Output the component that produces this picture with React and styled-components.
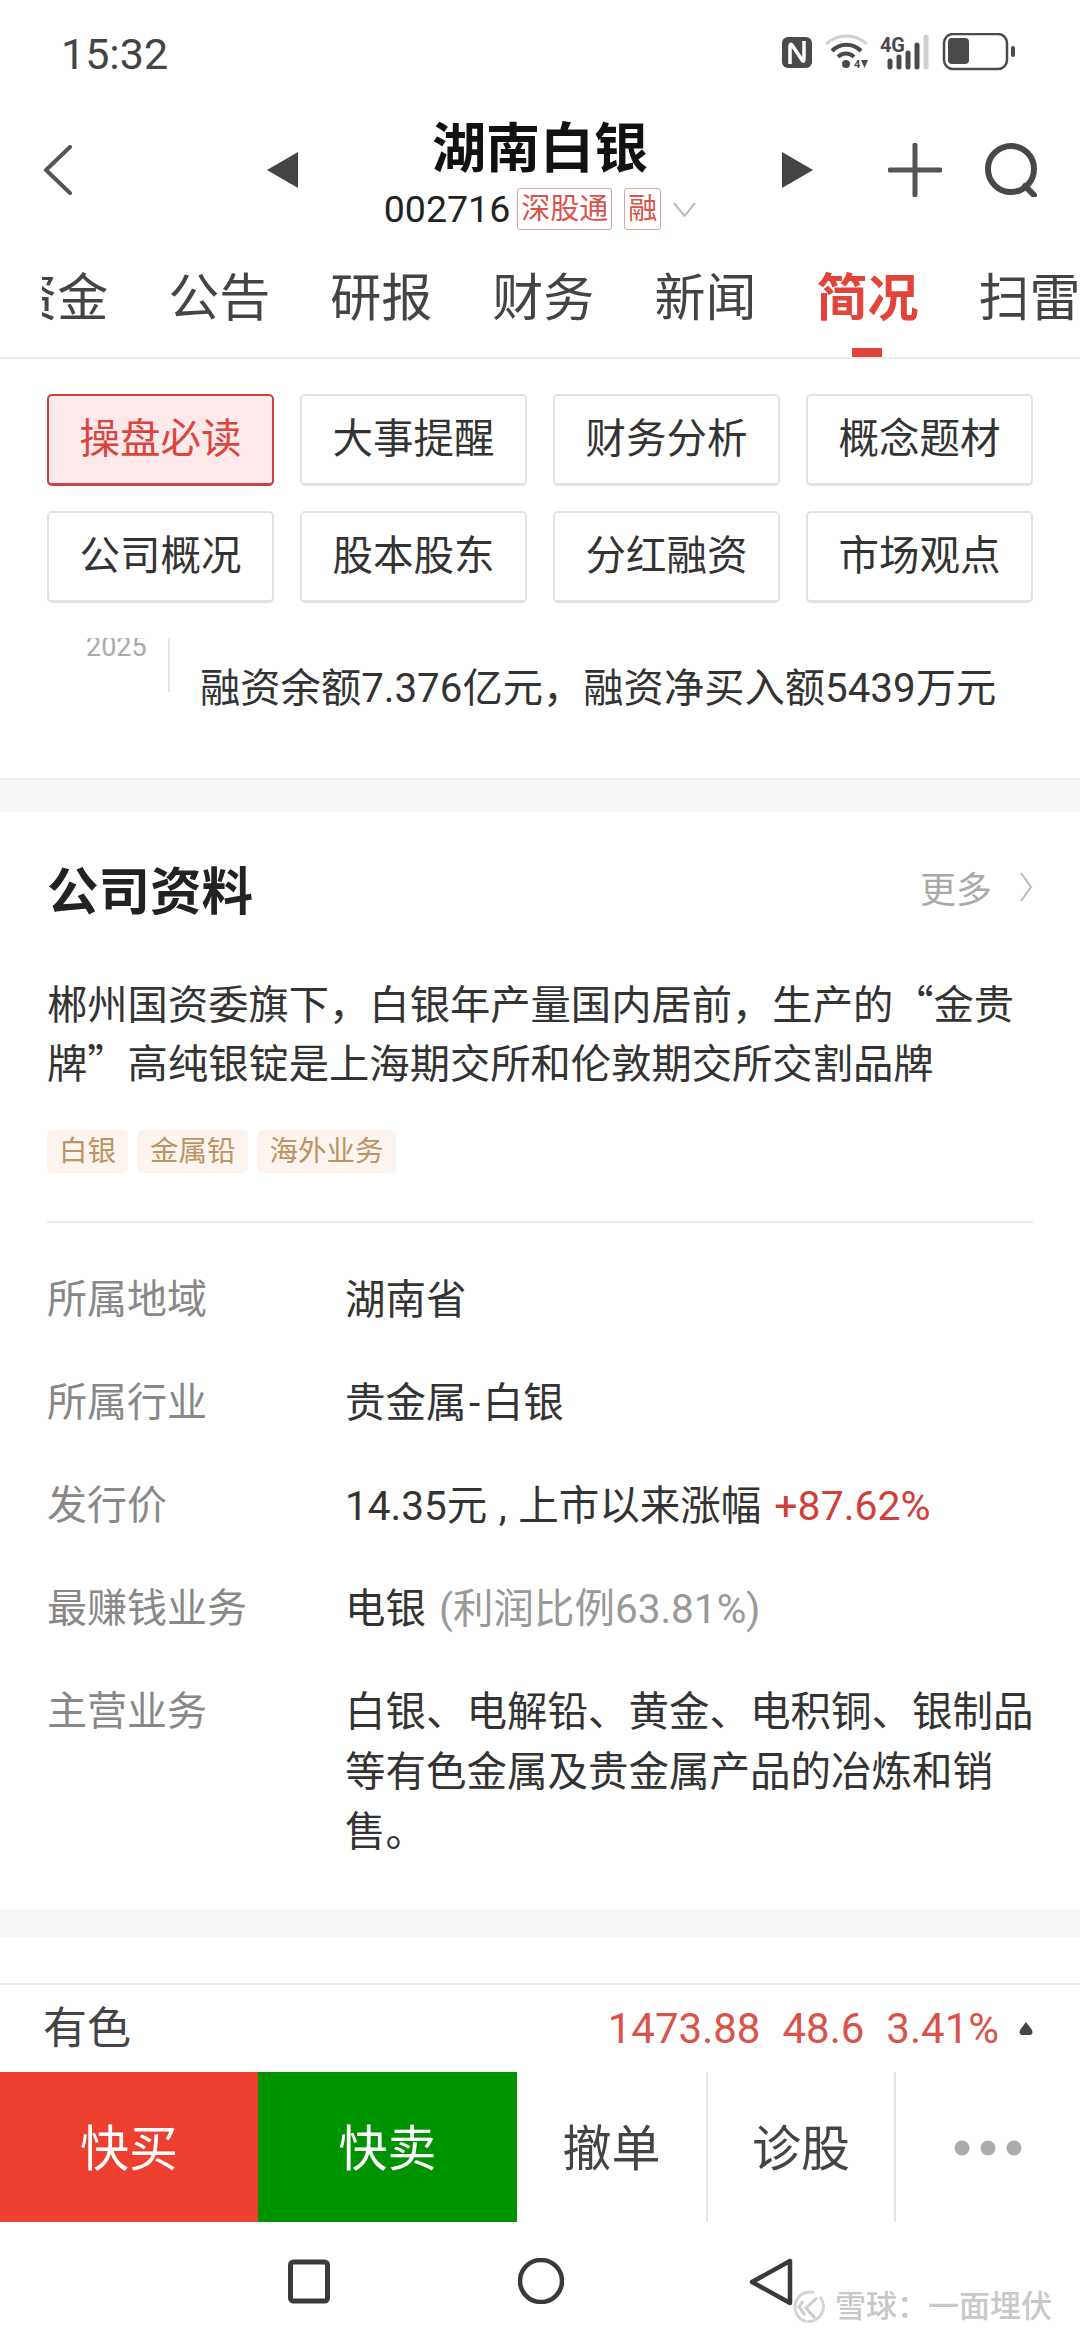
import React from 'react';
import styled, { createGlobalStyle } from 'styled-components';

const GlobalStyle = createGlobalStyle`
  html, body {
    margin: 0;
    padding: 0;
    background: #fff;
  }
  * {
    box-sizing: border-box;
  }
`;

const Page = styled.div`
  position: relative;
  width: 1080px;
  height: 2340px;
  overflow: hidden;
  background: #fff;
  color: #333;
  font-family: Roboto, "Noto Sans CJK SC", sans-serif;
`;

const StatusBar = styled.div`
  height: 100px;
  padding: 0 65px 0 61px;
  display: flex;
  align-items: flex-start;
  justify-content: space-between;
`;

const Clock = styled.div`
  margin-top: 28px;
  font-size: 43px;
  line-height: 52px;
  color: #444;
`;

const StatusIcons = styled.svg`
  margin-top: 33px;
  display: block;
`;

const Header = styled.div`
  height: 156px;
  display: grid;
  grid-template-columns: 267px 31px 484px 31px 267px;
`;

const BackCell = styled.div`
  padding: 45px 0 0 43px;
`;

const ArrowCell = styled.div`
  padding-top: 52px;
`;

const TitleBlock = styled.div`
  padding-top: 20px;
  display: flex;
  flex-direction: column;
  align-items: center;
`;

const Title = styled.div`
  font-size: 54px;
  line-height: 60px;
  font-weight: 700;
  color: #111;
`;

const CodeRow = styled.div`
  margin-top: 8px;
  display: flex;
  align-items: center;
  height: 42px;
`;

const Code = styled.span`
  font-size: 37.5px;
  line-height: 42px;
  color: #222;
  margin-right: 7px;
`;

const Badge = styled.span`
  height: 42px;
  padding: 0 3px;
  margin-right: 12px;
  border: 1px solid #e0a09a;
  border-radius: 3px;
  font-size: 29px;
  line-height: 40px;
  color: #d9534a;
`;

const ActionCell = styled.div`
  padding: 43px 0 0 75px;
  display: flex;
  gap: 42px;
  align-items: flex-start;
`;

const TabClip = styled.div`
  height: 103px;
  border-bottom: 2px solid #eeeeee;
  padding-left: 42px;
`;

const TabWindow = styled.div`
  overflow: hidden;
  height: 101px;
`;

const TabRow = styled.div`
  display: flex;
  gap: 60px;
  margin-left: -35.7px;
  padding-top: 13px;
`;

const Tab = styled.div`
  position: relative;
  flex: none;
  height: 88px;
  font-size: 51px;
  line-height: 60px;
  color: ${p => (p.$active ? '#e2433b' : '#444')};
  font-weight: ${p => (p.$active ? 700 : 400)};
  ${p => p.$active && `
    &::after {
      content: "";
      position: absolute;
      left: 36px;
      bottom: 0;
      width: 30px;
      height: 9px;
      background: #e2433b;
    }
  `}
`;

const ChipGrid = styled.div`
  padding: 35px 47px 0;
  display: grid;
  grid-template-columns: repeat(4, 227px);
  column-gap: 26px;
  row-gap: 25px;
`;

const Chip = styled.div`
  height: 92px;
  padding-bottom: 8px;
  display: flex;
  align-items: center;
  justify-content: center;
  border-radius: 5px;
  font-size: 40.5px;
  border: 2px solid ${p => (p.$active ? '#c8423f' : '#e2e2e2')};
  border-bottom-width: 3px;
  background: ${p => (p.$active ? '#fde8ea' : '#fff')};
  color: ${p => (p.$active ? '#d9463f' : '#333')};
`;

const NewsRow = styled.div`
  height: 175px;
  padding: 35px 0 0 86px;
  display: flex;
  align-items: flex-start;
`;

const Year = styled.div`
  width: 82px;
  height: 19px;
  overflow: hidden;
  font-size: 27px;
  line-height: 19px;
  color: #aaa;
`;

const NewsRule = styled.div`
  width: 2px;
  height: 54px;
  background: #e4e4e4;
`;

const NewsText = styled.div`
  margin: 26px 0 0 30px;
  font-size: 40.3px;
  line-height: 50px;
  white-space: nowrap;
  color: #333;
`;

const Band = styled.div`
  height: ${p => p.$h}px;
  background: #f7f7f7;
  border-top: ${p => (p.$line ? '2px solid #eeeeee' : 'none')};
`;

const Company = styled.section`
  height: 1097px;
  padding: 47px 47px 0;
`;

const CompanyHead = styled.div`
  display: flex;
  justify-content: space-between;
  align-items: center;
  height: 56px;
`;

const CompanyTitle = styled.h2`
  margin: 0;
  font-size: 51.5px;
  font-weight: 700;
  color: #222;
`;

const More = styled.div`
  display: flex;
  align-items: center;
  gap: 27px;
  font-size: 36px;
  color: #aaa;
`;

const Desc = styled.p`
  margin: 57px 0 0;
  font-family: "Noto Sans CJK SC", sans-serif;
  font-size: 40.3px;
  line-height: 59px;
  color: #333;
`;

const TagRow = styled.div`
  margin-top: 40px;
  display: flex;
  gap: 10px;
`;

const Tag = styled.span`
  height: 43px;
  padding: 0 12px;
  border-radius: 5px;
  background: #fcf4ee;
  color: #bd9362;
  font-size: 28.5px;
  line-height: 43px;
`;

const Rule = styled.div`
  margin-top: 48px;
  height: 2px;
  background: #eaeaea;
`;

const InfoList = styled.dl`
  margin: 47px -4px 0 0;
  display: grid;
  grid-template-columns: 298px 1fr;
  row-gap: 43px;
  font-size: 40px;
  line-height: 60px;
`;

const Label = styled.dt`
  color: #888;
`;

const Value = styled.dd`
  margin: 0;
  font-size: 40.5px;
  color: #333;
`;

const Dash = styled.span`
  padding: 0 2.5px;
`;

const Comma = styled.span`
  padding: 0 1.5px;
`;

const Up = styled.span`
  margin-left: 3px;
  font-size: 41px;
  color: #d0403b;
`;

const Muted = styled.span`
  margin-left: 3px;
  color: #999;
`;

const SectorRow = styled.div`
  height: 89px;
  margin-top: 46px;
  border-top: 2px solid #eeeeee;
  padding: 0 46px 0 43px;
  display: flex;
  align-items: center;
  justify-content: space-between;
`;

const SectorName = styled.div`
  font-size: 44px;
  margin-bottom: 8px;
  color: #444;
`;

const SectorQuote = styled.div`
  display: flex;
  align-items: center;
  gap: 19px;
  font-size: 42px;
  color: #d9534a;
`;

const QuoteNums = styled.div`
  display: flex;
  gap: 22px;
`;

const ActionBar = styled.div`
  height: 150px;
  display: flex;
`;

const TradeButton = styled.div`
  width: ${p => p.$w}px;
  padding-bottom: 6px;
  display: flex;
  align-items: center;
  justify-content: center;
  font-size: 49px;
  background: ${p => p.$bg || '#fff'};
  color: ${p => (p.$bg ? '#fff' : '#444')};
  border-left: ${p => (p.$split ? '2px solid #e6e6ea' : 'none')};
`;

const Dots = styled.svg`
  margin-top: 8px;
`;

const NavBar = styled.div`
  height: 118px;
  padding: 36px 0 0 288px;
  display: flex;
  align-items: flex-start;
`;

const Watermark = styled.div`
  position: absolute;
  left: 792px;
  top: 2289px;
  display: flex;
  align-items: center;
  gap: 7px;
  font-size: 31px;
  line-height: 36px;
  font-weight: 500;
  white-space: nowrap;
  color: #c8c8c8;
`;

const chips = ['操盘必读', '大事提醒', '财务分析', '概念题材', '公司概况', '股本股东', '分红融资', '市场观点'];
const tabs = ['资金', '公告', '研报', '财务', '新闻', '简况', '扫雷'];
const tags = ['白银', '金属铅', '海外业务'];

function Status() {
  return (
    <StatusIcons width="233" height="38" viewBox="782 33 233 38">
      <rect x="782" y="37" width="30" height="31" rx="6" fill="#4a4a4a" />
      <path d="M790 64V46q0-3 2-1l10 15q2 3 2-1V41" fill="none" stroke="#fff" strokeWidth="3.500" />
      <path d="M826 44a30 30 0 0 1 41 0" fill="none" stroke="#d0d0d0" strokeWidth="3" />
      <path d="M832 51a20 20 0 0 1 29 0M838 57a11 11 0 0 1 16 0" fill="none" stroke="#4a4a4a" strokeWidth="4" />
      <circle cx="846" cy="64" r="4" fill="#4a4a4a" />
      <text x="854" y="68" fontSize="11" fontWeight="700" fill="#4a4a4a">4</text>
      <path d="M861 60h7l-3.500 8z" fill="#4a4a4a" />
      <text x="880" y="52" fontSize="20" fontWeight="700" fill="#4a4a4a" textLength="25">4G</text>
      <path d="M890 61v6M899 57v10M908 53v14M917 45v22" stroke="#4a4a4a" strokeWidth="5" strokeLinecap="round" />
      <path d="M926 37v30" stroke="#d0d0d0" strokeWidth="5" strokeLinecap="round" />
      <rect x="944" y="34" width="63" height="35" rx="9" fill="none" stroke="#4a4a4a" strokeWidth="2.500" />
      <rect x="948" y="38" width="21" height="26" rx="4" fill="#4a4a4a" />
      <rect x="1011" y="46" width="4" height="11" rx="2" fill="#4a4a4a" />
    </StatusIcons>
  );
}

export default function App() {
  return (
    <Page>
      <GlobalStyle />
      <StatusBar>
        <Clock>15:32</Clock>
        <Status />
      </StatusBar>

      <Header>
        <BackCell>
          <svg width="30" height="50" viewBox="0 0 30 50">
            <path d="M27 2L3 25l24 23" fill="none" stroke="#555" strokeWidth="4" strokeLinecap="round" strokeLinejoin="round" />
          </svg>
        </BackCell>
        <ArrowCell>
          <svg width="31" height="36" viewBox="0 0 31 36"><path d="M31 0v36L0 18z" fill="#444" /></svg>
        </ArrowCell>
        <TitleBlock>
          <Title>湖南白银</Title>
          <CodeRow>
            <Code>002716</Code>
            <Badge>深股通</Badge>
            <Badge>融</Badge>
            <svg width="23" height="15" viewBox="0 0 23 15">
              <path d="M1 1l10.500 13L22 1" fill="none" stroke="#bbb" strokeWidth="2" />
            </svg>
          </CodeRow>
        </TitleBlock>
        <ArrowCell>
          <svg width="31" height="36" viewBox="0 0 31 36"><path d="M0 0v36l31-18z" fill="#444" /></svg>
        </ArrowCell>
        <ActionCell>
          <svg width="54" height="54" viewBox="0 0 54 54">
            <path d="M27 2v50M2 27h50" stroke="#555" strokeWidth="5" strokeLinecap="round" />
          </svg>
          <svg width="54" height="54" viewBox="0 0 54 54">
            <circle cx="27" cy="26" r="23" fill="none" stroke="#484848" strokeWidth="6" />
            <path d="M41 43l9 9" stroke="#484848" strokeWidth="6" strokeLinecap="round" />
          </svg>
        </ActionCell>
      </Header>

      <TabClip>
        <TabWindow>
          <TabRow>
            {tabs.map(t => <Tab key={t} $active={t === '简况'}>{t}</Tab>)}
          </TabRow>
        </TabWindow>
      </TabClip>

      <ChipGrid>
        {chips.map((c, i) => <Chip key={c} $active={i === 0}>{c}</Chip>)}
      </ChipGrid>

      <NewsRow>
        <Year>2025</Year>
        <NewsRule />
        <NewsText>融资余额7.376亿元，融资净买入额5439万元</NewsText>
      </NewsRow>

      <Band $h={34} $line />

      <Company>
        <CompanyHead>
          <CompanyTitle>公司资料</CompanyTitle>
          <More>
            更多
            <svg width="14" height="32" viewBox="0 0 14 32">
              <path d="M2 2l10 14L2 30" fill="none" stroke="#bbb" strokeWidth="2" />
            </svg>
          </More>
        </CompanyHead>
        <Desc>郴州国资委旗下，白银年产量国内居前，生产的“金贵牌”高纯银锭是上海期交所和伦敦期交所交割品牌</Desc>
        <TagRow>
          {tags.map(t => <Tag key={t}>{t}</Tag>)}
        </TagRow>
        <Rule />
        <InfoList>
          <Label>所属地域</Label>
          <Value>湖南省</Value>
          <Label>所属行业</Label>
          <Value>贵金属<Dash>-</Dash>白银</Value>
          <Label>发行价</Label>
          <Value>14.35元 <Comma>,</Comma> 上市以来涨幅 <Up>+87.62%</Up></Value>
          <Label>最赚钱业务</Label>
          <Value>电银 <Muted>(利润比例63.81%)</Muted></Value>
          <Label>主营业务</Label>
          <Value>白银、电解铅、黄金、电积铜、银制品等有色金属及贵金属产品的冶炼和销售。</Value>
        </InfoList>
      </Company>

      <Band $h={28} />

      <SectorRow>
        <SectorName>有色</SectorName>
        <SectorQuote>
          <QuoteNums>
            <span>1473.88</span>
            <span>48.6</span>
            <span>3.41%</span>
          </QuoteNums>
          <svg width="16" height="13" viewBox="0 0 16 13">
            <path d="M8 0l6 8q1.500 5-3 5H5q-4.500 0-3-5z" fill="#444" />
          </svg>
        </SectorQuote>
      </SectorRow>

      <ActionBar>
        <TradeButton $w={258} $bg="#ee4030">快买</TradeButton>
        <TradeButton $w={259} $bg="#009300">快卖</TradeButton>
        <TradeButton $w={189}>撤单</TradeButton>
        <TradeButton $w={188} $split>诊股</TradeButton>
        <TradeButton $w={186} $split>
          <Dots width="68" height="16" viewBox="0 0 68 16">
            <circle cx="8" cy="8" r="7.500" fill="#aaa" />
            <circle cx="34" cy="8" r="7.500" fill="#aaa" />
            <circle cx="60" cy="8" r="7.500" fill="#aaa" />
          </Dots>
        </TradeButton>
      </ActionBar>

      <NavBar>
        <svg width="42" height="46" viewBox="0 0 42 46">
          <rect x="2.500" y="4" width="37" height="39" rx="3" fill="none" stroke="#3a3a3a" strokeWidth="5" />
        </svg>
        <svg width="46" height="46" viewBox="0 0 46 46" style={{ marginLeft: 188 }}>
          <circle cx="23" cy="23" r="21" fill="none" stroke="#3a3a3a" strokeWidth="4.500" />
        </svg>
        <svg width="44" height="48" viewBox="0 0 44 48" style={{ marginLeft: 185 }}>
          <path d="M41 3v42L3 24z" fill="none" stroke="#3a3a3a" strokeWidth="4.500" strokeLinejoin="round" />
        </svg>
      </NavBar>

      <Watermark>
        <svg width="36" height="36" viewBox="0 0 36 36">
          <path d="M22 3.500A15 15 0 1 0 14 32.500" fill="none" stroke="#d4d4d4" strokeWidth="3" />
          <path d="M15 32.500A15 15 0 0 0 28 8" fill="none" stroke="#d4d4d4" strokeWidth="3" />
          <path d="M25 9L14 19l9 10M11 12l-4 6 6 8" fill="none" stroke="#cccccc" strokeWidth="3" />
        </svg>
        雪球：一面埋伏
      </Watermark>
    </Page>
  );
}
